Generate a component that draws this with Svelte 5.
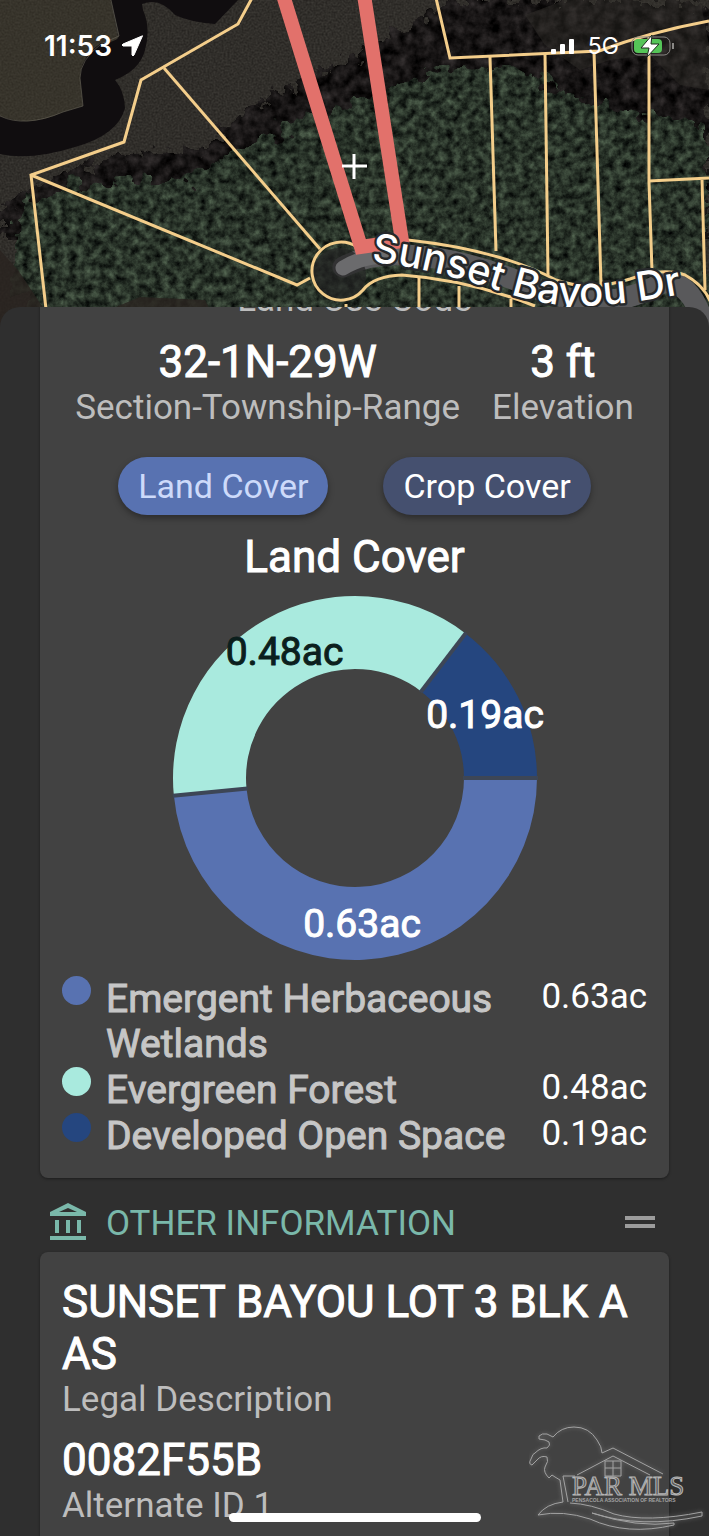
<script>
	let activeCover = "Land Cover"

	const covers = [ "Land Cover", "Crop Cover" ]

	const landCover = [
		{ name: "Emergent Herbaceous Wetlands", acres: 0.63, color: "#5872b1", label: "#ffffff" },
		{ name: "Evergreen Forest", acres: 0.48, color: "#a9eade", label: "#0b1f1d" },
		{ name: "Developed Open Space", acres: 0.19, color: "#25467f", label: "#ffffff" },
	]

	const stats = [
		{ value: "32-1N-29W", label: "Section-Township-Range" },
		{ value: "3 ft", label: "Elevation" },
	]

	const otherInfo = [
		{ value: "SUNSET BAYOU LOT 3 BLK A AS", label: "Legal Description" },
		{ value: "0082F55B", label: "Alternate ID 1" },
	]

	const outer = 182
	const inner = 109

	function point( radius, angle ) {
		return `${ radius * Math.cos( angle ) } ${ radius * Math.sin( angle ) }`
	}

	function buildSlices( items ) {
		const total = items.reduce( ( sum, item ) => sum + item.acres, 0 )
		let start = 0
		return items.map( ( item ) => {
			const end = start + item.acres / total * Math.PI * 2
			const middle = ( start + end ) / 2
			const large = end - start > Math.PI ? 1 : 0
			const slice = {
				...item,
				d: `M${ point( outer, start ) } A${ outer } ${ outer } 0 ${ large } 1 ${ point( outer, end ) } L${ point( inner, end ) } A${ inner } ${ inner } 0 ${ large } 0 ${ point( inner, start ) } Z`,
				edge: `M${ point( inner - 1, start ) } L${ point( outer + 1, start ) }`,
				x: 145 * Math.cos( middle ),
				y: 145 * Math.sin( middle ) + 14,
			}
			start = end
			return slice
		} )
	}

	const slices = buildSlices( landCover )
</script>

<div class="app">
	<section class="map" aria-label="Parcel map">
		<svg class="aerial" viewBox="0 0 709 330" preserveAspectRatio="xMidYMin slice">
			<defs>
				<filter id="trees" x="0" y="0" width="100%" height="100%" color-interpolation-filters="sRGB">
					<feTurbulence type="fractalNoise" baseFrequency="0.13" numOctaves="4" seed="8" result="noise" />
					<feColorMatrix in="noise" values="0.42 0 0 0 -0.05  0.5 0 0 0 -0.05  0.4 0 0 0 -0.04  0 0 0 0 1" result="green" />
					<feTurbulence type="fractalNoise" baseFrequency="0.06" numOctaves="3" seed="3" result="rough" />
					<feDisplacementMap in="SourceGraphic" in2="rough" scale="40" xChannelSelector="R" yChannelSelector="G" result="shape" />
					<feComposite in="green" in2="shape" operator="in" />
				</filter>
				<filter id="shade" x="0" y="0" width="100%" height="100%" color-interpolation-filters="sRGB">
					<feTurbulence type="fractalNoise" baseFrequency="0.09" numOctaves="4" seed="12" result="noise" />
					<feColorMatrix in="noise" values="0.3 0 0 0 -0.06  0.28 0 0 0 -0.06  0.28 0 0 0 -0.06  0 0 0 0 1" result="dark" />
					<feDisplacementMap in="SourceGraphic" in2="noise" scale="34" xChannelSelector="R" yChannelSelector="G" result="shape" />
					<feComposite in="dark" in2="shape" operator="in" />
				</filter>
				<filter id="grain" x="0" y="0" width="100%" height="100%" color-interpolation-filters="sRGB">
					<feTurbulence type="fractalNoise" baseFrequency="0.5" numOctaves="2" seed="5" result="noise" />
					<feColorMatrix in="noise" values="0.14 0 0 0 0.12  0.14 0 0 0 0.11  0.13 0 0 0 0.1  0 0 0 0 1" />
				</filter>
				<path id="street" d="M371 262 C430 268 470 282 520 297 C570 311 610 308 710 289" />
			</defs>

			<rect width="709" height="330" filter="url(#grain)" />
			<path d="M0 0 H111 L118 40 L100 45 Q80 60 82 85 L83 108 L60 115 Q30 127 0 118 Z" fill="#45402f" opacity="0.35" />
			<path d="M111 0 L119 35 Q119 42 101 43 Q80 58 80 78 L83 106 L63 112 Q30 128 0 116 V154 Q30 161 75 147 Q118 135 125 108 Q124 90 115 80 Q140 70 145 50 Q151 28 143 10 L142 4 Q160 -3 175 15 Q190 22 215 24 L238 0 Z" fill="#100d0f" />
			<path d="M111 0 L119 36 L101 44 Q80 60 80 78 L83 106 L63 112 Q25 128 0 116" fill="none" stroke="#69655a" opacity="0.6" />

			<path d="M0 210 L55 175 L130 152 L200 150 L245 112 L290 85 L365 50 L450 0 H709 V240 H0 Z" fill="#000" filter="url(#shade)" />
			<path d="M565 0 H700 L709 45 V90 L680 85 L650 55 L610 60 L580 70 L545 45 L525 15 Z" fill="#38342f" opacity="0.4" />
			<path d="M25 205 L70 185 L190 178 L235 150 L280 130 L330 110 L400 85 L440 65 L520 70 L590 105 L709 125 V330 H70 L10 285 Z" fill="#000" filter="url(#trees)" />
			<path d="M0 250 L18 270 L42 306 L60 330 H0 Z M60 330 L140 297 L205 300 L220 330 Z" fill="#29231f" opacity="0.8" />

			<path d="M343 267 Q370 253 405 255 Q460 257 525 284 Q600 318 660 284 Q690 275 706 330" fill="none" stroke="#59595b" stroke-width="21" stroke-linecap="round" />
			<circle cx="339" cy="275" r="27" fill="#222" opacity="0.7" />
			<path d="M343 268 Q365 254 400 256" fill="none" stroke="#6b6b6d" stroke-width="15" stroke-linecap="round" />

			<g class="parcels">
				<path d="M252 -2 L238 24 L141 80 L124 142 L31 175 L46 309" />
				<path d="M164 68 L320 249" />
				<path d="M31 175 L297 285 L310 278" />
				<path d="M357 247 A29 29 0 1 0 363 290 Q374 276 402 275 Q470 280 535 306" />
				<path d="M436 -2 L450 58 L599 51 Q650 32 709 21" />
				<path d="M490 57 L496 251" />
				<path d="M545 54 L548 275" />
				<path d="M594 51 L601 284" />
				<path d="M649 37 V182 L652 271" />
				<path d="M649 181 L709 178 M702 179 L705 290" />
				<path d="M408 240 Q500 250 556 280 Q590 292 630 279 Q662 267 685 275 Q704 285 711 303" />
				<path d="M419 277 V310 M459 286 V310 M511 299 V310 M346 304 V310" />
			</g>
			<path d="M283 -5 L361 247 L402 241 L364 -5" fill="none" stroke="#e2716b" stroke-width="14" />
			<path d="M354 154 V179 M342 166 H367" stroke="#fff" stroke-width="3" />

			<text class="street">
				<textPath href="#street">Sunset Bayou Dr</textPath>
			</text>
		</svg>

		<div class="status">
			<div class="clock">
				<span>11:53</span>
				<svg width="24" height="24" viewBox="0 0 24 24" aria-hidden="true">
					<path d="M22 2 Q23 1 22 3 L14 21 Q13 23 12 21 V12 H3 Q1 11 3 10 Z" fill="#fff" stroke="#fff" stroke-linejoin="round" />
				</svg>
			</div>
			<div class="signals">
				<svg width="25" height="18" viewBox="0 0 25 18" aria-hidden="true">
					<rect y="12" width="5" height="5" rx="1" fill="#fff" />
					<rect x="9" y="7" width="5" height="10" rx="1" fill="#fff" />
					<rect x="18" y="2" width="5" height="15" rx="1" fill="#fff" />
				</svg>
				<span class="network">5G</span>
				<svg width="44" height="22" viewBox="0 0 44 22" aria-hidden="true">
					<rect x="1" y="2" width="38" height="18" rx="6" fill="none" stroke="#8a8885" stroke-width="1" />
					<path d="M42 8 V14" stroke="#8a8885" stroke-width="2" />
					<rect x="3" y="4" width="28" height="14" rx="4" fill="#55c558" />
					<path d="M21 0 L10 13 H18 L16 22 L28 9 H20 Z" fill="#fff" stroke="#1c2a1c" stroke-width="1" />
				</svg>
			</div>
		</div>
	</section>

	<main class="panel">
		<section class="card cover-card">
			<div class="label clipped">Land Use Code</div>
			<div class="stats">
				{#each stats as stat}
					<div>
						<div class="value">{stat.value}</div>
						<div class="label">{stat.label}</div>
					</div>
				{/each}
			</div>

			<div class="tabs">
				{#each covers as cover}
					<button class:active={activeCover === cover} on:click={() => activeCover = cover}>{cover}</button>
				{/each}
			</div>

			<h2 class="value">{activeCover}</h2>

			<svg class="donut" viewBox="-182 -182 364 364" role="img" aria-label="Land cover by acres">
				{#each slices as slice}
					<path d={slice.d} fill={slice.color} />
				{/each}
				{#each slices as slice}
					<path class="edge" d={slice.edge} />
				{/each}
				{#each slices as slice}
					<text x={slice.x} y={slice.y} fill={slice.label} stroke={slice.label}>{slice.acres}ac</text>
				{/each}
			</svg>

			<ul class="legend">
				{#each landCover as item}
					<li>
						<span class="dot" style="background: {item.color}"></span>
						<span class="name">{item.name}</span>
						<span class="acres">{item.acres}ac</span>
					</li>
				{/each}
			</ul>
		</section>

		<header class="section-header">
			<svg width="36" height="38" viewBox="0 0 36 38" aria-hidden="true">
				<path d="M0 9 L18 0 L36 9 V13 H0 Z M9 9 H27 L18 5 Z M5 17 H9 V30 H5 Z M16 17 H20 V30 H16 Z M27 17 H31 V30 H27 Z M0 33 H36 V37 H0 Z" fill="#7ab8aa" fill-rule="evenodd" />
			</svg>
			<h3>OTHER INFORMATION</h3>
			<button class="handle" aria-label="Reorder section"></button>
		</header>

		<section class="card info-card">
			{#each otherInfo as info}
				<div class="info">
					<div class="value">{info.value}</div>
					<div class="label">{info.label}</div>
				</div>
			{/each}
		</section>
	</main>

	<svg class="watermark" width="180" height="112" viewBox="0 0 180 112">
		<g class="emblem">
			<path d="M34 78 L31 56 L26 53 L23 51 L20 54 Q14 48 16 43 Q20 37 18 33 Q12 31 8 36 L3 41 Q-1 40 2 35 Q4 29 6 29 Q12 23 18 24 Q22 21 20 18 L16 16 L10 15 V12 Q13 9 18 10 L24 13 Q32 3 45 3 Q60 3 68 16 Q73 23 73 29 L84 24 L134 50" />
			<path d="M48 51 L84 32 L121 51" />
			<path d="M39 78 L34 52 H46" />
			<path d="M76 37 H92 V52 H76 Z M84 37 V52 M76 44 H92" />
			<path d="M34 78 Q17 80 9 91 Q34 86 61 95 Q98 112 145 101 V99 Q108 104 63 89 Q112 105 173 92 V88 Q118 99 85 90 Q62 80 41 79" />
		</g>
		<text class="mark" x="43" y="71">PAR MLS</text>
		<text class="tagline" x="43" y="78">PENSACOLA ASSOCIATION OF REALTORS</text>
	</svg>
	<div class="home-bar"></div>
</div>

<style>
	:global(body) {
		background: #2f2f2f;
	}

	.app {
		position: relative;
		display: flex;
		flex-direction: column;
		height: 100vh;
		overflow: hidden;
		font-family: Roboto, sans-serif;
		color: #fff;
	}

	.map {
		position: relative;
		flex: 0 0 307px;
	}

	/* runs a little under the panel so its rounded corners show imagery */
	.aerial {
		position: absolute;
		top: 0;
		left: 0;
		width: 100%;
		height: 330px;
		background: #252220;
	}

	.parcels path {
		fill: none;
		stroke: #f4ce8b;
		stroke-width: 3px;
	}

	.street {
		font: 500 40px Inter, sans-serif;
		fill: #fff;
		stroke: #26282a;
		stroke-width: 5px;
		stroke-linejoin: round;
		paint-order: stroke;
	}

	.status {
		position: relative;
		display: flex;
		justify-content: space-between;
		align-items: center;
		padding: 30px 34px 0 44px;
		font-family: Inter, sans-serif;
	}

	.clock, .signals {
		display: flex;
		align-items: center;
		height: 32px;
	}

	.clock {
		gap: 8px;
		font-size: 28px;
		font-weight: 600;
	}

	.signals {
		gap: 12px;
	}

	.network {
		font-size: 23px;
	}

	.panel {
		position: relative;
		flex: 1;
		min-height: 0;
		overflow: hidden;
		padding: 0 40px;
		background: #2f2f2f;
		border-radius: 20px 20px 0 0;
	}

	.card {
		padding: 0 22px;
		background: #424242;
		border-radius: 8px;
		box-shadow: 0 1px 3px rgba(0, 0, 0, 0.4);
	}

	.cover-card {
		margin-top: -27px;
		padding-bottom: 19px;
	}

	.value {
		margin: 0;
		font-size: 44px;
		font-weight: 400;
		line-height: 52px;
		-webkit-text-stroke: 1px currentColor;
	}

	.label {
		font-size: 35px;
		line-height: 40px;
		color: #bdbdbd;
	}

	.clipped {
		text-align: center;
	}

	.stats {
		display: flex;
		justify-content: center;
		gap: 32px;
		margin: 16px -22px 0;
		text-align: center;
	}

	.tabs {
		display: flex;
		justify-content: center;
		gap: 55px;
		margin: 29px 0 16px;
	}

	.tabs button {
		height: 58px;
		padding: 0 20px;
		border: 0;
		border-radius: 29px;
		background: #45506f;
		box-shadow: 0 3px 6px rgba(0, 0, 0, 0.35);
		color: #fff;
		font: 34px Roboto, sans-serif;
	}

	.tabs button.active {
		background: #5872b1;
		color: #cddafa;
	}

	h2 {
		text-align: center;
	}

	.donut {
		display: block;
		width: 364px;
		margin: 13px auto 16px;
		overflow: visible;
	}

	.edge {
		stroke: #3d4656;
		stroke-width: 4px;
	}

	.donut text {
		font-size: 39px;
		text-anchor: middle;
		stroke-width: 1px;
	}

	.legend {
		margin: 0;
		padding: 0;
		list-style: none;
	}

	.legend li {
		display: flex;
		align-items: flex-start;
	}

	.dot {
		flex: 0 0 29px;
		height: 29px;
		margin-right: 15px;
		border-radius: 50%;
	}

	.name {
		flex: 1;
		padding-top: 1px;
		font-size: 39px;
		line-height: 45px;
		color: #c6c6c6;
		-webkit-text-stroke: 1px currentColor;
	}

	.acres {
		margin-left: 24px;
		font-size: 35px;
		line-height: 42px;
	}

	.section-header {
		display: flex;
		align-items: center;
		box-sizing: border-box;
		height: 74px;
		padding: 17px 14px 0 10px;
	}

	.section-header svg {
		margin-bottom: 4px;
	}

	h3 {
		flex: 1;
		margin: 0 0 0 20px;
		font-size: 35px;
		font-weight: 400;
		line-height: 40px;
		color: #7ab8aa;
	}

	.handle {
		width: 30px;
		height: 12px;
		margin-bottom: 4px;
		padding: 0;
		border: solid #9c9c9c;
		border-width: 4px 0;
		background: none;
	}

	.info-card {
		padding-top: 24px;
		padding-bottom: 24px;
	}

	.info {
		margin-bottom: 14px;
	}

	.watermark {
		position: absolute;
		right: 0;
		bottom: 0;
	}

	.emblem {
		fill: none;
		stroke: #a3a3a3;
		stroke-linejoin: round;
		filter: drop-shadow(0 0 2px #888);
	}

	.mark {
		font: 27px "Liberation Serif", serif;
		fill: #5a5a5a;
		stroke: #b5b5b5;
		stroke-width: 1px;
	}

	.tagline {
		font: bold 5px "Liberation Sans", sans-serif;
		fill: #a3a3a3;
	}

	.home-bar {
		position: absolute;
		bottom: 14px;
		left: 50%;
		width: 252px;
		height: 9px;
		border-radius: 5px;
		background: #fff;
		transform: translateX(-50%);
	}
</style>
